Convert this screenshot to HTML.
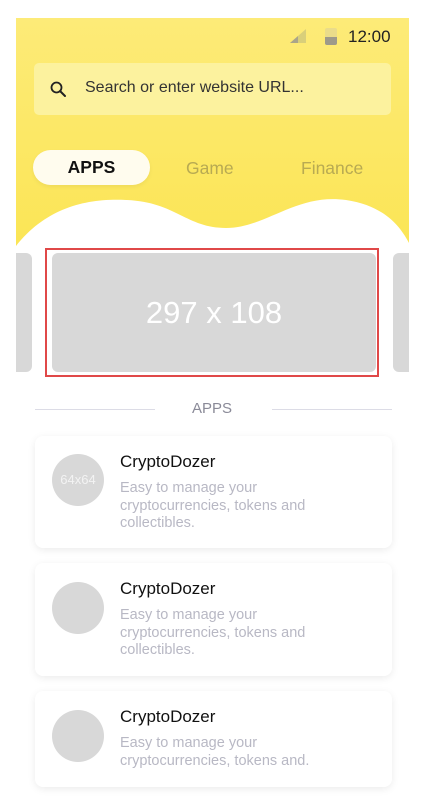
<!DOCTYPE html>
<html><head><style>
body{margin:0;width:422px;height:802px;background:#fff;font-family:"Liberation Sans",sans-serif;position:relative;overflow:hidden}
.page{position:absolute;left:16px;top:18px;width:393px;height:784px;background:#fff;overflow:hidden}
.hdr{position:absolute;left:0;top:0;width:393px;height:230px;background:linear-gradient(#fdeb78,#fbe555)}
.a{position:absolute}
.card{position:absolute;left:19px;width:357px;background:#fff;border-radius:8px;box-shadow:0 2px 8px rgba(0,0,0,.08)}
.av{position:absolute;left:17px;width:52px;height:52px;border-radius:50%;background:#d8d8d8;color:#f3f3f3;font-size:13px;text-align:center;line-height:52px}
.t{position:absolute;left:85px;font-size:17px;color:#111}
.d{position:absolute;left:85px;font-size:14.5px;color:#b8b8c4;line-height:17.5px;width:215px}
</style></head><body>
<div class="page">
<div class="hdr"></div>
<svg class="a" style="left:0;top:170px" width="393" height="70"><path d="M0 58 C30 20 70 10 110 12 C160 14 170 40 210 40 C250 40 280 5 330 12 C370 18 385 40 393 55 L393 70 L0 70Z" fill="#fff"/></svg>
<svg class="a" style="left:274px;top:11px" width="20" height="14"><path d="M0 14 L16 0 L16 14Z" fill="#d9cf7a"/><path d="M0 14 L8 7 L8 14Z" fill="#aaa58a"/></svg>
<div class="a" style="left:309px;top:10px;width:12px;height:17px;border-radius:2px;background:#eadc8a"></div>
<div class="a" style="left:309px;top:19px;width:12px;height:8px;border-radius:0 0 2px 2px;background:#9e9a8a"></div>
<div class="a" style="left:332px;top:9px;font-size:17px;color:#222">12:00</div>
<div class="a" style="left:18px;top:45px;width:357px;height:52px;border-radius:5px;background:#fcf29e"></div>
<svg class="a" style="left:33px;top:62px" width="20" height="20"><circle cx="7.5" cy="7.5" r="5" stroke="#222" stroke-width="1.8" fill="none"/><path d="M11 11 L16 16" stroke="#222" stroke-width="2" stroke-linecap="round"/></svg>
<div class="a" style="left:69px;top:61px;font-size:16px;color:#333">Search or enter website URL...</div>
<div class="a" style="left:17px;top:132px;width:117px;height:35px;border-radius:18px;background:#fffcee;box-shadow:0 2px 4px rgba(0,0,0,.05);text-align:center;line-height:35px;font-size:17.5px;color:#111;font-weight:bold">APPS</div>
<div class="a" style="left:170px;top:140px;font-size:17.5px;color:#b8aa52">Game</div>
<div class="a" style="left:285px;top:140px;font-size:17.5px;color:#b8aa52">Finance</div>
<div class="a" style="left:-10px;top:235px;width:26px;height:119px;border-radius:6px;background:#d8d8d8"></div>
<div class="a" style="left:377px;top:235px;width:26px;height:119px;border-radius:6px;background:#d8d8d8"></div>
<div class="a" style="left:29px;top:230px;width:334px;height:129px;border:2px solid #e04848;box-sizing:border-box"></div>
<div class="a" style="left:36px;top:235px;width:324px;height:119px;border-radius:6px;background:#d8d8d8;color:#fff;font-size:31px;text-align:center;line-height:119px">297 x 108</div>
<div class="a" style="left:19px;top:391px;width:120px;height:1px;background:#dcdce6"></div>
<div class="a" style="left:256px;top:391px;width:120px;height:1px;background:#dcdce6"></div>
<div class="a" style="left:176px;top:382px;font-size:15px;color:#8a8a98">APPS</div>
<div class="card" style="top:418px;height:112px"><div class="av" style="top:18px">64x64</div><div class="t" style="top:16px">CryptoDozer</div><div class="d" style="top:44px">Easy to manage your cryptocurrencies, tokens and collectibles.</div></div>
<div class="card" style="top:545px;height:113px"><div class="av" style="top:19px"></div><div class="t" style="top:16px">CryptoDozer</div><div class="d" style="top:44px">Easy to manage your cryptocurrencies, tokens and collectibles.</div></div>
<div class="card" style="top:673px;height:96px"><div class="av" style="top:19px"></div><div class="t" style="top:16px">CryptoDozer</div><div class="d" style="top:44px">Easy to manage your cryptocurrencies, tokens and.</div></div>
</div>
</body></html>
